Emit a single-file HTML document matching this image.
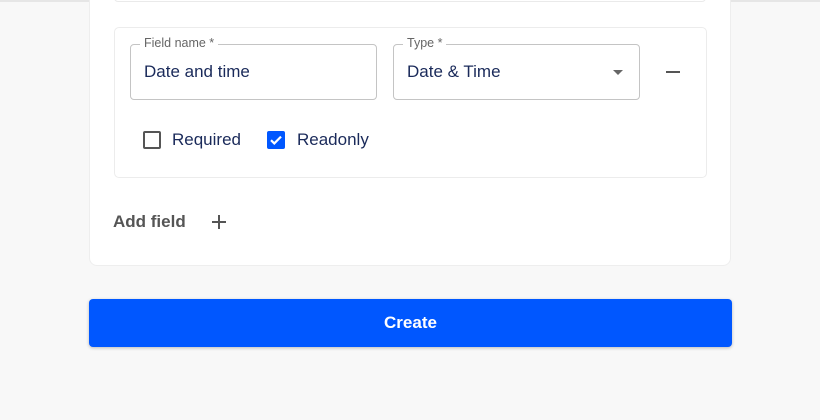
<!DOCTYPE html>
<html><head><style>
*{box-sizing:border-box;margin:0;padding:0}
body{width:820px;height:420px;background:#f8f8f8;font-family:"Liberation Sans",sans-serif;position:relative;overflow:hidden}
.abs{position:absolute}
.card{left:89px;top:-10px;width:642px;height:276px;background:#fff;border-radius:8px;border:1px solid #eee}
.prev{left:114px;top:-10px;width:592px;height:12px;border:1px solid #eaeaea;border-radius:4px;background:#fff}
.inner{left:114px;top:27px;width:593px;height:151px;border:1px solid #ececec;border-radius:5px;background:#fff}
.inp{height:56px;border:1px solid #c4c4c4;border-radius:4px;background:#fff}
.lbl{top:-9px;left:9px;background:#fff;padding:0 4px;font-size:12.5px;color:#666}
.val{left:13px;top:17px;font-size:17px;color:#1a2a5a}
.cb{width:18px;height:18px;border:2px solid #555;border-radius:2px}
.cbl{font-size:17px;color:#1a2a5a}
</style></head><body>
<div class="abs" style="left:0;top:0;width:820px;height:2px;background:#e6e6e6"></div>
<div class="abs card"></div>
<div class="abs prev"></div>
<div class="abs inner"></div>
<div class="abs inp" style="left:130px;top:44px;width:247px"><div class="abs lbl">Field name *</div><div class="abs val">Date and time</div></div>
<div class="abs inp" style="left:393px;top:44px;width:247px"><div class="abs lbl">Type *</div><div class="abs val">Date &amp; Time</div>
<div class="abs" style="left:219px;top:25px;width:0;height:0;border-left:5px solid transparent;border-right:5px solid transparent;border-top:5px solid #666"></div></div>
<div class="abs" style="left:666px;top:71px;width:14px;height:2px;background:#555"></div>
<div class="abs cb" style="left:143px;top:131px"></div>
<div class="abs cbl" style="left:172px;top:130px">Required</div>
<div class="abs" style="left:267px;top:131px;width:18px;height:18px;background:#0057ff;border-radius:2px">
<svg width="18" height="18" viewBox="0 0 18 18"><path d="M4 9.2l3.3 3.2L14 5.6" stroke="#fff" stroke-width="2.2" fill="none"/></svg></div>
<div class="abs cbl" style="left:297px;top:130px">Readonly</div>
<div class="abs" style="left:113px;top:212px;font-size:17px;font-weight:bold;color:#555">Add field</div>
<svg class="abs" style="left:211px;top:214px" width="16" height="16" viewBox="0 0 16 16"><path d="M8 1v14M1 8h14" stroke="#555" stroke-width="2"/></svg>
<div class="abs" style="left:89px;top:299px;width:643px;height:48px;background:#0057ff;border-radius:4px;box-shadow:0 1px 3px rgba(0,0,0,.25);color:#fff;font-weight:bold;font-size:17px;text-align:center;line-height:48px">Create</div>
</body></html>
